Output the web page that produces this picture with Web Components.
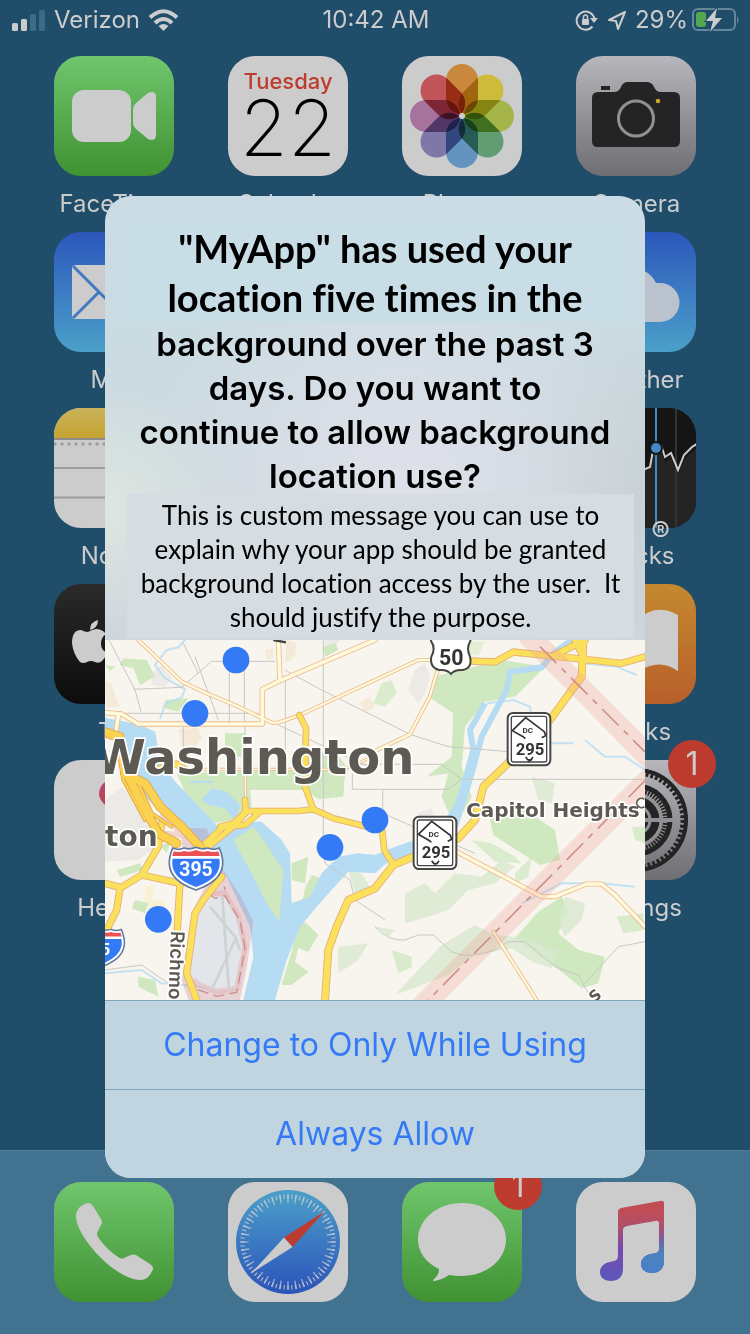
<!DOCTYPE html>
<html lang="en">
<head>
<meta charset="utf-8">
<meta name="viewport" content="width=device-width, initial-scale=1">
<title>Home Screen</title>
<style>
  html, body { margin: 0; height: 100%; }
  body { font-family: Inter, "Liberation Sans", sans-serif; background: #1f4d6a; }
</style>
</head>
<body>
<phone-screen>
  <status-bar slot="status" carrier="Verizon" time="10:42 AM" battery="29%"></status-bar>

  <app-icon slot="apps" name="facetime" label="FaceTime"></app-icon>
  <app-icon slot="apps" name="calendar" label="Calendar"></app-icon>
  <app-icon slot="apps" name="photos" label="Photos"></app-icon>
  <app-icon slot="apps" name="camera" label="Camera"></app-icon>
  <app-icon slot="apps" class="first" name="mail" label="Mail"></app-icon>
  <app-icon slot="apps" class="last" name="weather" label="Weather"></app-icon>
  <app-icon slot="apps" class="first" name="notes" label="Notes"></app-icon>
  <app-icon slot="apps" class="last" name="stocks" label="Stocks" mark="®"></app-icon>
  <app-icon slot="apps" class="first" name="tv" label="TV"></app-icon>
  <app-icon slot="apps" class="last" name="books" label="Books"></app-icon>
  <app-icon slot="apps" class="first" name="health" label="Health"></app-icon>
  <app-icon slot="apps" class="last" name="settings" label="Settings" badge="1"></app-icon>

  <app-icon slot="dock" name="phone"></app-icon>
  <app-icon slot="dock" name="safari"></app-icon>
  <app-icon slot="dock" name="messages" badge="1"></app-icon>
  <app-icon slot="dock" name="music"></app-icon>

  <permission-alert slot="alert">
    <span slot="lead">"MyApp" has used your</span>
    <span slot="lead">location five times in the</span>
    <span slot="title">background over the past 3</span>
    <span slot="title">days. Do you want to</span>
    <span slot="title">continue to allow background</span>
    <span slot="title">location use?</span>
    <span slot="message">This is custom message you can use to</span>
    <span slot="message">explain why your app should be granted</span>
    <span slot="message">background location access by the user.&nbsp; It</span>
    <span slot="message">should justify the purpose.</span>
    <location-map slot="map"></location-map>
    <alert-action slot="actions">Change to Only While Using</alert-action>
    <alert-action slot="actions">Always Allow</alert-action>
  </permission-alert>
</phone-screen>

<script>
const attach = (el, html) => { el.attachShadow({ mode: 'open' }).innerHTML = html; };

/* Artwork of each app, on a 120 x 120 tile */
const grad = (id, a, b) => `<linearGradient id="${id}" x1="0" y1="0" x2="0" y2="1"><stop offset="0" stop-color="${a}"/><stop offset="1" stop-color="${b}"/></linearGradient>`;
const tile = (a, b) => `<defs>${grad('bg', a, b)}</defs><rect width="120" height="120" fill="url(#bg)"/>`;
const petals = ['#c9883c', '#cdbb3c', '#a6b549', '#629c72', '#6394bf', '#7d78a8', '#a5739c', '#c05458'];

const ART = {
  facetime: tile('#70c66e', '#409232') + `
    <rect x="18" y="34" width="59" height="52" rx="12" fill="#ccc"/>
    <path d="M79 53q0-3 3-6l12-10q8-3 8 4v38q0 7-8 4L82 73q-3-3-3-6z" fill="#ccc"/>`,
  calendar: tile('#ccc', '#ccc') + `
    <text x="60" y="33" text-anchor="middle" font-size="22" font-weight="500" fill="#bd3c2f">Tuesday</text>
    <text x="60" y="100" text-anchor="middle" font-size="78" font-weight="200" fill="#000">22</text>`,
  photos: tile('#ccc', '#ccc') + `<g style="isolation:isolate" transform="translate(60 60)">
    ${petals.map((c, i) => `<rect x="-16" y="-52" width="32" height="50" rx="16" fill="${c}" style="mix-blend-mode:multiply" transform="rotate(${i * 45})"/>`).join('')}
    </g><circle cx="60" cy="60" r="3" fill="#ccc"/>`,
  camera: tile('#b6b6bc', '#6f6e72') + `
    <path d="M25 30h9v4h-9zM16 42q0-6 6-6h16q5 0 7-5 2-5 7-5h18q6 0 8 5 2 5 7 5h13q6 0 6 6v43q0 6-6 6H22q-6 0-6-6z" fill="#242424"/>
    <circle cx="60" cy="62.500" r="17.500" fill="none" stroke="#919195" stroke-width="3"/>
    <circle cx="82" cy="45" r="2.300" fill="#c9a432"/>`,
  mail: tile('#2c57bb', '#4ba0c9') + `
    <rect x="18" y="33" width="84" height="54" rx="3" fill="#ccc"/>
    <path d="M19 34l34 34q7 6 14 0l34-34M19 86l26-26M101 86L75 60" fill="none" stroke="#4079c0" stroke-width="3"/>`,
  weather: tile('#2c57bb', '#4ba0c9') + `
    <circle cx="38" cy="48" r="19" fill="#c9a432"/>
    <path d="M36 90a19 19 0 0 1-2-38 25 25 0 0 1 46-1h4a19 19 0 1 1 0 39z" fill="#b9c2cd"/>`,
  notes: `<defs>${grad('bg', '#c9b35a', '#c6a431')}</defs><rect width="120" height="120" fill="#ccc"/>
    <rect width="120" height="30" fill="url(#bg)"/><rect y="30" width="120" height="2" fill="#8d8d8f"/>
    <path d="M1 36h120" stroke="#9d9d9d" stroke-width="3.400" stroke-dasharray="0 7" stroke-linecap="round"/>
    <path d="M0 60h120M0 89.500h120" stroke="#9d9d9f" stroke-width="2"/>`,
  stocks: `<rect width="120" height="120" fill="#151515"/>
    <path d="M0 70l20 10 20-30 20 20 9-9 5-1 6-22 4 3 5 13 6-4 7 17 6-15 8-8 7-5V120H0z" fill="#242424"/>
    <path d="M20 0v120M60 0v120M100 0v120" stroke="#333" stroke-width="2"/>
    <path d="M0 70l20 10 20-30 20 20 9-9 5-2 4-22 7 0 4 12 6-4 7 17 6-15 8-8 8-5" fill="none" stroke="#ccc" stroke-width="2"/>
    <path d="M80 0v120" stroke="#4189c8" stroke-width="2"/>
    <circle cx="80" cy="40" r="7" fill="#151515"/><circle cx="80" cy="40" r="5" fill="#4189c8"/>`,
  tv: tile('#2a2a2a', '#0c0c0c') + `
    <path d="M36 46q0-8 8-10 0 8-8 10zM34 48q-3 0-7-2-9 0-9 13 1 11 8 19 3 2 7 0t8 0q4 2 7-1 3-3 5-8-6-3-6-9 0-7 5-10-4-5-10-5-5 1-8 3z" fill="#ccc"/>`,
  books: tile('#c4892f', '#b75f2a') + `
    <path d="M15 31q25-12 42 4v52q-18-12-42-1zM63 35q17-16 39-4v56q-18-13-39 0z" fill="#ccc"/>`,
  health: `<defs>${grad('bg', '#b5487f', '#bd3c2f')}</defs><rect width="120" height="120" fill="#ccc"/>
    <path d="M76 63Q45 45 45 34 46 20 60 20q10 0 16 9 6-9 16-9 14 0 14 15 0 12-30 28z" fill="url(#bg)"/>`,
  settings: tile('#b6b6bc', '#6f6e72') + `
    <circle cx="60" cy="60" r="48" fill="none" stroke="#242424" stroke-width="7" pathLength="120" stroke-dasharray="1.200 .8"/>
    <circle cx="60" cy="60" r="50" fill="none" stroke="#242424" stroke-width="4"/>
    <circle cx="60" cy="60" r="34" fill="none" stroke="#242424" stroke-width="5"/>
    <circle cx="60" cy="60" r="31" fill="none" stroke="#242424" stroke-width="8" pathLength="120" stroke-dasharray="1.200 .8"/>
    <circle cx="60" cy="60" r="24" fill="#242424"/>
    <path d="M60 60h37M60 60L41 92M60 60L41 28" stroke="#919195" stroke-width="4"/>
    <circle cx="60" cy="60" r="14" fill="none" stroke="#919195" stroke-width="3"/>
    <circle cx="60" cy="60" r="25" fill="none" stroke="#919195" stroke-width="3"/>`,
  phone: tile('#70c66e', '#409232') + `
    <path d="M22 34c0-7 6-12 12-13q3 0 5 3l8 13q2 3 0 6l-3 6q-2 3 0 6c5 8 13 15 20 20q4 3 8 0l5-2q3-1 5 0l14 9q4 3 3 5c-3 8-7 11-13 11-10 0-26-9-39-22-14-14-25-31-25-42z" fill="#ccc"/>`,
  safari: `<defs>${grad('bg', '#4ba0c9', '#2b53ba')}</defs><rect width="120" height="120" fill="#ccc"/>
    <circle cx="60" cy="60" r="52" fill="url(#bg)"/>
    <g fill="none" stroke="#ccc" stroke-opacity=".75">
      <circle cx="60" cy="60" r="45.500" stroke-width="4.500" pathLength="72" stroke-dasharray=".3 .7" stroke-dashoffset=".15"/>
      <circle cx="60" cy="60" r="43.500" stroke-width="8.500" pathLength="72" stroke-dasharray=".35 1.650" stroke-dashoffset=".175"/></g>
    <path d="M56 55.500L97 29 64.500 65z" fill="#bd3c2f"/><path d="M56 55.500L23 91.500 64.500 65z" fill="#ccc"/>`,
  messages: tile('#70c66e', '#409232') + `
    <path d="M60 21c24 0 44 16 44 36.500S84 94 60 94q-7 0-13-1-7 5-15 6-2 0 0-2 5-4 5-10C24 81 16 70 16 57.500 16 37 36 21 60 21z" fill="#ccc"/>`,
  music: `<defs><linearGradient id="bg" x1="0" y1="0" x2="0" y2="1"><stop offset=".1" stop-color="#c14d54"/><stop offset=".3" stop-color="#b14f68"/><stop offset=".6" stop-color="#7849ad"/><stop offset="1" stop-color="#5b57bd"/></linearGradient>
    <linearGradient id="bl" x1="0" y1="0" x2="0" y2="1"><stop offset=".25" stop-color="#a3567c" stop-opacity="0"/><stop offset=".45" stop-color="#77609f"/><stop offset=".7" stop-color="#4a82be"/><stop offset="1" stop-color="#4a7fc8"/></linearGradient></defs>
    <rect width="120" height="120" fill="#ccc"/>
    <path d="M42 30q0-3 3-4l39-7q4-1 4 2v58c0 8-5 12-12 12-6 0-11-3-11-9 0-5 4-9 10-10 5-1 8-1 8-5V42q0-4-4-3l-28 5q-4 1-4 4v39c0 8-5 12-12 12-6 0-11-3-11-9 0-5 4-9 10-10 5-1 8-2 8-6z" fill="url(#bg)"/>
    <path d="M84 38l4-10v51c0 8-5 12-12 12-6 0-11-3-11-9 0-5 4-9 10-10 5-1 8-1 8-5z" fill="url(#bl)"/>`
};

customElements.define('app-icon', class extends HTMLElement {
  connectedCallback() {
    const { name, label, badge, mark } = Object.fromEntries(['name', 'label', 'badge', 'mark'].map(k => [k, this.getAttribute(k)]));
    attach(this, `<style>
      :host { display: block; width: 120px; }
      button { position: relative; display: flex; flex-direction: column; align-items: center; gap: 14px; width: 100%;
        padding: 0; border: 0; background: none; font: inherit; color: #ccc; cursor: pointer; }
      svg { display: block; width: 120px; height: 120px; border-radius: 27px; }
      .label { font-size: 24px; line-height: 28px; white-space: nowrap; }
      .badge { position: absolute; top: -20px; right: -20px; width: 48px; height: 48px; border-radius: 50%;
        background: #bd3c2f; font-size: 32px; line-height: 48px; text-align: center; }
      .mark { position: absolute; top: 112px; right: 26px; font-size: 28px; line-height: 24px; }
    </style>
    <button type="button" aria-label="${label || name}">
      <svg viewBox="0 0 120 120" aria-hidden="true">${ART[name]}</svg>
      ${label ? `<span class="label">${label}</span>` : ''}
      ${mark ? `<span class="mark">${mark}</span>` : ''}
      ${badge ? `<span class="badge">${badge}</span>` : ''}
    </button>`);
  }
});

customElements.define('status-bar', class extends HTMLElement {
  connectedCallback() {
    attach(this, `<style>
      :host { display: grid; grid-template-columns: 1fr auto 1fr; align-items: center; height: 40px; padding: 0 10px 0 12px;
        color: #ccc; font-size: 24px; line-height: 28px; }
      div { display: flex; align-items: center; gap: 8px; }
      .end { justify-content: flex-end; }
      .power { gap: 4px; }
      svg { display: block; }
    </style>
    <div>
      <svg width="34" height="24" viewBox="0 0 34 24" fill="#ccc"><rect y="15" width="6" height="8" rx="1.500"/><rect x="9" y="11" width="6" height="12" rx="1.500"/><g fill="#3d6a84"><rect x="18" y="6" width="6" height="17" rx="1.500"/><rect x="27" y="2" width="6" height="21" rx="1.500"/></g></svg>
      <span>${this.getAttribute('carrier')}</span>
      <svg width="31" height="24" viewBox="0 0 31 24" fill="none" stroke="#ccc" stroke-width="4"><path d="M2 9.500Q15.500-3 29 9.500M7 15q8.500-8 17 0"/><path d="M15.500 23l-5-5q5-4 10 0z" fill="#ccc" stroke="none"/></svg>
    </div>
    <span>${this.getAttribute('time')}</span>
    <div class="end">
      <svg width="24" height="24" viewBox="0 0 24 24" fill="none" stroke="#ccc" stroke-width="2"><path d="M17.500 18.500A9 9 0 1 1 19.500 11"/><path d="M15 10h8l-4 5z" fill="#ccc" stroke="none"/><rect x="7" y="11" width="7" height="6" rx="1" fill="#ccc" stroke="none"/><path d="M8.500 11V9a2 2 0 0 1 4 0v2" stroke-width="1.500"/></svg>
      <svg width="20" height="22" viewBox="0 0 20 22" fill="none" stroke="#ccc" stroke-width="2" stroke-linejoin="round"><path d="M18 3L2 11l7 1 2 8z"/></svg>
      <div class="power"><span>${this.getAttribute('battery')}</span>
      <svg width="48" height="26" viewBox="0 0 48 26"><rect x="1" y="2" width="42" height="21" rx="5" fill="none" stroke="#668799" stroke-width="2"/><path d="M45 9q3 3 0 8z" fill="#668799"/><rect x="4" y="5" width="10" height="15" rx="3" fill="#53a84f"/><path d="M25 1L14 14h7l-3 11L30 11h-7z" fill="#ccc" stroke="#1f4d6a" stroke-width="2" paint-order="stroke"/></svg></div>
    </div>`);
  }
});

customElements.define('alert-action', class extends HTMLElement {
  connectedCallback() {
    attach(this, `<style>
      :host { display: block; border-top: 1px solid #7fa6bb; }
      button { display: block; width: 100%; height: 88px; padding: 0; border: 0; background: #c1d5e0; color: #347af6;
        font: inherit; font-size: 32px; line-height: 44px; cursor: pointer; }
    </style><button type="button"><slot></slot></button>`);
  }
});

customElements.define('permission-alert', class extends HTMLElement {
  connectedCallback() {
    attach(this, `<style>
      :host { display: block; width: 72%; border-radius: 26px; overflow: hidden; color: #000; text-align: center;
        background:
          radial-gradient(circle at 0 32%, #dde6e0 0, transparent 130px),
          radial-gradient(circle at 55% 30%, #dfe1ea 0, transparent 260px),
          radial-gradient(circle at 100% 30%, #c6d0d3 0, transparent 160px),
          linear-gradient(#cbdce6 0, #cbdbe2 150px, #cfd6dc 440px); }
      header { padding: 22px 10px 0; }
      h1 { margin: 0; font-size: 33px; font-weight: 600; line-height: 44px; white-space: nowrap; }
      .lead { display: block; padding-top: 6px; background: #c9dde6; font-family: Lato, sans-serif; font-size: 38px; font-weight: 700; line-height: 49px; font-variant-ligatures: none; }
      p { margin: -4px 1px 2px 12px; padding: 4px 0; background: #d5dde3; font-family: Lato, sans-serif; font-size: 26px; line-height: 34px; white-space: nowrap; font-variant-ligatures: none; }
      ::slotted(span) { display: block; }
    </style>
    <section role="alertdialog" aria-modal="true">
      <header>
        <h1><span class="lead"><slot name="lead"></slot></span><slot name="title"></slot></h1>
        <p><slot name="message"></slot></p>
      </header>
      <slot name="map"></slot>
      <slot name="actions"></slot>
    </section>`);
  }
});

/* Roads of the map: [width, path] on a 1620 x 1080 plane */
const LIGHT = [
  [9, 'M240 388H700L740 380 810 345M420 388L422 490'],
  [12, 'M100 0L230 125 300 158 400 200 500 248H520L585 225 810 120 940 60H1000'],
  [16, 'M0 218L50 222 100 252H472V148L525 122 810 0M520 0L525 122M40 225L32 280'],
  [12, 'M810 333L915 283 975 168 998 90'],
  [15, 'M1055 635L1310 770H1350L1445 732H1490L1530 765 1620 860'],
  [12, 'M1165 875L1295 1080']
];
const MAJOR = [
  [20, 'M583 225L603 265 600 440 625 508M420 480L422 515'],
  [20, 'M345 560L385 550 425 513H580L625 508 685 535 785 560 830 560 838 630 865 675M460 520L420 555 355 560 285 625M425 515L385 560 310 620'],
  [24, 'M660 1080L670 930 695 860 730 780 810 745 865 675 925 650 1060 595 1110 540 1135 440 1200 378 1335 240 1430 110 1435 0'],
  [22, 'M1100 63L1170 66 1225 36 1410 55 1550 70 1620 50M1340 50L1440 0M1410 0L1440 60'],
  [22, 'M170 550L160 620 110 705 45 745 35 810 0 880M0 730L45 742M110 705L225 730 217 865'],
  [22, 'M350 710L295 780 270 820 245 1000 275 1080M150 390L215 372 240 388']
];
const FREEWAY = [
  [28, 'M0 276L45 290 60 390 110 490 160 580 215 610M60 400L120 430 165 500 230 560 285 620'],
  [12, 'M0 285L35 300 55 420 120 540M100 430L140 520 200 560']
];
const draw = (list, casing, fill) =>
  list.map(([w, d]) => `<path d="${d}" stroke="${casing}" stroke-width="${w}"/>`).join('') +
  list.map(([w, d]) => `<path d="${d}" stroke="${fill}" stroke-width="${w - 5}"/>`).join('');
const interstate = (x, y, s, n) => `<g transform="translate(${x} ${y}) scale(${s})">
  <path d="M-70-62q17 8 34 0 18 6 36-2 18 8 36 2 17 8 34 0 12 30 10 50-4 50-80 76-76-26-80-76-2-20 10-50z" fill="#fff" stroke="#64799f" stroke-width="5"/>
  <path d="M-70-30H70q3 15 0 25-8 38-70 60-62-22-70-60-3-10 0-25z" fill="#347af6"/>
  <path d="M-67-52q16 5 31-1 18 5 36-3 18 8 36 3 15 6 31 1l4 14H-71z" fill="#ea5054"/>
  <text class="route" y="22" text-anchor="middle" font-size="58" fill="#fff">${n}</text></g>`;
const dcRoute = (x, y) => `<g transform="translate(${x} ${y})">
  <rect x="-64" y="-78" width="128" height="157" rx="16" fill="#fff" stroke="#454745" stroke-width="6"/>
  <rect x="-53" y="-68" width="106" height="137" rx="6" fill="none" stroke="#454745" stroke-width="4"/>
  <path d="M-15-5L-50-25-10-64 46-22 50-10 38-4M-15-5l4 4M-10 54l6 8 10 1 6-9M0 61v9" fill="none" stroke="#333" stroke-width="5"/>
  <text class="route" x="-4" y="-18" text-anchor="middle" font-size="24" fill="#333">DC</text>
  <text class="route" x="3" y="47" text-anchor="middle" font-size="50" fill="#333">295</text></g>`;

customElements.define('location-map', class extends HTMLElement {
  connectedCallback() {
    const visits = [[393, 60], [270, 220], [810, 540], [675, 622], [160, 838]];
    attach(this, `<style>
      :host { display: block; height: 360px; overflow: hidden; }
      svg { display: block; width: 100%; height: 100%; }
      .route { font-family: Roboto, sans-serif; font-weight: 700; }
      .place { font-family: "DejaVu Sans", sans-serif; font-weight: 700; fill: #5c5a52; stroke: #fff; stroke-width: 10px; paint-order: stroke; stroke-linejoin: round; }
      .street { font-family: Inter, sans-serif; font-weight: 600; }
    </style>
    <svg viewBox="0 0 1620 1080" preserveAspectRatio="xMidYMid slice" role="img" aria-label="Map of recent locations around Washington">
      <rect width="1620" height="1080" fill="#f8f5ee"/>
      <g fill="#ebeae6"><path d="M0 480L50 440 100 500 155 570 150 625 100 660 0 665zM140 100l30-25 30 40-20 25-40-5zM910 150l20-60 30-20 15 40-15 50-20 30zM940 520l40-15 10 30-50 10zM660 0h45l-20 28-25-10z"/></g>
      <g fill="#f5e9d8"><path d="M0 120l20 10 15 50 10 20-40 5zM220 268l60-5 10 30-20 30-40-5zM545 0l30 10-5 40-30 20zM480 30l25-5v30l-20 5zM765 190l30-20 15 30-30 20zM540 805l40 0v50l-35-10z" /><path d="M120 740l30-10-10 45 40 10v25l-60-5z" fill="#faf0d6"/></g>
      <g fill="#cfe8c0">
        <path d="M360 280h60v70h-30l-30-5zM55 55l70 5 25 50-45 25-20-50-40-10zM0 75l30 5-15 12zM180 180l70-5-30 40-40-10z"/>
        <path d="M215 400L420 392 720 390 715 470 640 478 600 450H435L440 500 380 540 330 550 250 480z"/>
        <path d="M610 365l40-30 50 10 30 45-20 45H620z"/><path d="M655 20l35-10 10 20-40 20z"/>
        <path d="M985 110L1190 60 1320 80 1230 170 1140 185 1080 260 1070 380 1100 470 1050 560 1010 470 1030 400 965 410 1040 350 1045 220 970 170z"/>
        <path d="M1000 0l140 5-20 40-100-10z" opacity=".5"/>
        <path d="M1150 520l110-10 90 60 15 90-60 15-140-90z"/>
        <path d="M1370 770l20 40-30 70 60 50 80 20-20 80-50 15-60-50-140-100 70-80z"/>
        <path d="M1100 600l60 10 70 40 20 20-80-5zM1230 700l50-50-10 60-40 20zM830 130l30-10 15 40-35 40-35-10z" opacity=".7"/>
        <path d="M600 745l20-40 30 10-20 70-50 30-40 60 60-30 40 40-30 50-30-10-10 40 40 30-50 40h-30l30-100z"/>
        <path d="M35 690l70-20 10 20-70 20zM90 780l40 10-10 30-40-15zM165 615l30-5-10 30zM560 670l50-20-10 80-40-10zM100 1010l50 10 10 50-60-30z"/>
        <path d="M1535 830l80-10v50l-60 10zM860 930l60 20v30l-40 20zM1580 560l40 0v50l-30-10z" opacity=".8"/>
      </g>
      <g fill="#d8e9cd" opacity=".8"><path d="M900 760l60-30 30 30 60-60 80 10 60-50 40 20-60 50-80 20-60 60-60 20-70 20zM810 860l60 10-20 20zM1010 915l100-60 60 30 100 10 90 40-20 50-60-20-60-40-110 20-80 60-160 60zM730 690l40 10 30 50-50 10zM700 920l90-10-30 50-60 40zM1280 410l70 20-10 60-40-10zM1380 770l60 20-10 50-50 50-20-40z"/></g>
      <g fill="#b5dcf2">
        <path d="M0 233L100 253 150 275 168 370 215 430 330 550 350 580 420 545 470 545 530 600 555 640 560 790 615 770 650 700 700 650 760 640 810 645 870 620 930 600 925 645 850 665 810 700 730 695 675 755 635 800 585 860 545 960 510 1080H415L445 950 435 860 365 710 285 620 225 570 130 480 80 400 60 330 0 262z"/>
        <path d="M290 480l30-35 45 10 40 40-15 50-30-40-50-10zM255 422h70v6h-70z"/>
      </g>
      <path d="M1000 590L1060 490 1075 440 1105 330 1095 270 1140 190M1050 560L1100 400 1130 290 1205 150 1215 95 1310 82 1345 40 1400 0" fill="none" stroke="#b5dcf2" stroke-width="18"/>
      <path d="M240 0l-20 22-35 8-35 45 30 40 60 32-10 25-50 20-15 45M1145 190l80-10 50 20 10 80 60 30 60 0M1435 70l100 10 60 25M1440 300l60 50 60 0 60 40M0 1000l110-10 60 40 130 10M1250 790l120-60 120 0 100 10" fill="none" stroke="#b5dcf2" stroke-width="6" opacity=".8"/>
      <path d="M385 600L445 560 475 600 535 690 523 845 485 790 445 710z" fill="#cfe8c0"/>
      <path d="M225 565h80l40 110 60 90 40 80-20 140-20 95H250l-20-60 30-200 40-80-60-60z" fill="#b87a98" opacity=".27"/>
      <path d="M275 790l40-25 50 10 40 60 10 90-20 120-60 10-60-20-30-50 30-150z" fill="#e2e5e9"/>
      <path d="M310 760h50l40 70 20 90-25 125-60 10-50-20-20-15M165 525l45 20 10 40-40-5" fill="none" stroke="#e5a5a5" stroke-width="16" opacity=".4"/>
      <path d="M310 760l20 15 30-8 45 75 15 85-25 130-60 12-70-25M345 690l15 60" fill="none" stroke="#cd8d88" stroke-width="4" stroke-dasharray="34 16"/>
      <path d="M315 800l75 90 15 40M352 770l20 285M390 900l-70 150" fill="none" stroke="#cfd2d2" stroke-width="8"/>
      <path d="M12 0L90 150 108 214M85 148L230 142 320 64H510M60 220H460M373 60V250M418 60V252M235 252V388M420 252V388M541 120V388M540 90L650 150 810 230M520 255L810 390M655 0V560M742 400V448H1030L1070 418 1010 373H740M1070 418H1620M810 230L915 283 1030 320 1210 335M833 450V520L1110 640M270 50L340 240M235 10L280 100M655 550V600L660 670 735 720 750 780 840 840M810 860Q850 905 900 900L940 885 985 885 1040 935Q1090 960 1170 930L1210 905 1260 905 1350 980 1420 1005 1450 1060M1440 1030L1540 920 1620 905M0 990L110 975 190 1030" fill="none" stroke="#c7c7c4" stroke-width="3"/>
      <g fill="none" stroke-linejoin="round" stroke-linecap="round">
        ${draw(LIGHT, '#ecbb8c', '#fffadb')}${draw(MAJOR, '#e6ad76', '#fbe05c')}${draw(FREEWAY, '#e0a04c', '#fbd150')}
      </g>
      <g fill="none" stroke="#ee9f94" stroke-width="66" stroke-opacity=".27"><path d="M1265-20L1650 370"/><path d="M1660 390L940 1110"/></g>
      <g fill="none" stroke="#cf9088" stroke-width="5" stroke-dasharray="70 22 18 22"><path d="M1305 20L1620 336"/><path d="M1620 422L960 1090"/></g>

      <text class="place" x="928" y="403" text-anchor="end" font-size="144">Washington</text>
      <text class="place" x="1604" y="530" text-anchor="end" font-size="60">Capitol Heights</text>
      <text class="place" x="158" y="618" text-anchor="end" font-size="84">Arlington</text>
      <text class="place street" transform="translate(198 872) rotate(92)" font-size="57">Richmond</text>
      <text class="place" transform="translate(1468 1090) rotate(-40)" font-size="46">S</text>
      <path d="M1618 478a14 14 0 1 0 0 22" fill="#fff" stroke="#5c5a52" stroke-width="5"/>
      <path d="M505 0l38 7" stroke="#444" stroke-width="7"/>

      <path d="M985-30h108q10 15 2 35-12 20 0 45 8 34-22 40-24-2-35 12-11-14-35-12-30-6-24-40 14-25 0-45-6-20 6-35z" fill="#fff" stroke="#454745" stroke-width="6"/>
      <text class="route" x="1039" y="74" text-anchor="middle" font-size="64" fill="#333">50</text>
      ${dcRoute(1272, 297)}${dcRoute(990, 608)}
      ${interstate(273, 686, 1, '395')}${interstate(-14, 924, .9, '95')}
      ${visits.map(([x, y]) => `<circle cx="${x}" cy="${y}" r="40" fill="#347af6"/>`).join('')}
    </svg>`);
  }
});

customElements.define('phone-screen', class extends HTMLElement {
  connectedCallback() {
    attach(this, `<style>
      :host { position: relative; display: flex; flex-direction: column; min-height: 100vh; overflow: hidden; background: #1f4d6a; }
      main, nav { display: grid; grid-template-columns: repeat(4, 120px); justify-content: space-between; }
      main { padding: 16px 54px; row-gap: 14px; }
      nav { margin-top: auto; padding: 31px 54px 32px; background: #41728f; border-top: 1px solid #4f7c97; }
      .overlay { position: absolute; inset: 40px 0 0; display: flex; align-items: center; justify-content: center; }
      ::slotted(.first) { grid-column: 1; }
      ::slotted(.last) { grid-column: 4; }
    </style>
    <slot name="status"></slot>
    <main><slot name="apps"></slot></main>
    <nav aria-label="Dock"><slot name="dock"></slot></nav>
    <div class="overlay"><slot name="alert"></slot></div>`);
  }
});
</script>
</body>
</html>
